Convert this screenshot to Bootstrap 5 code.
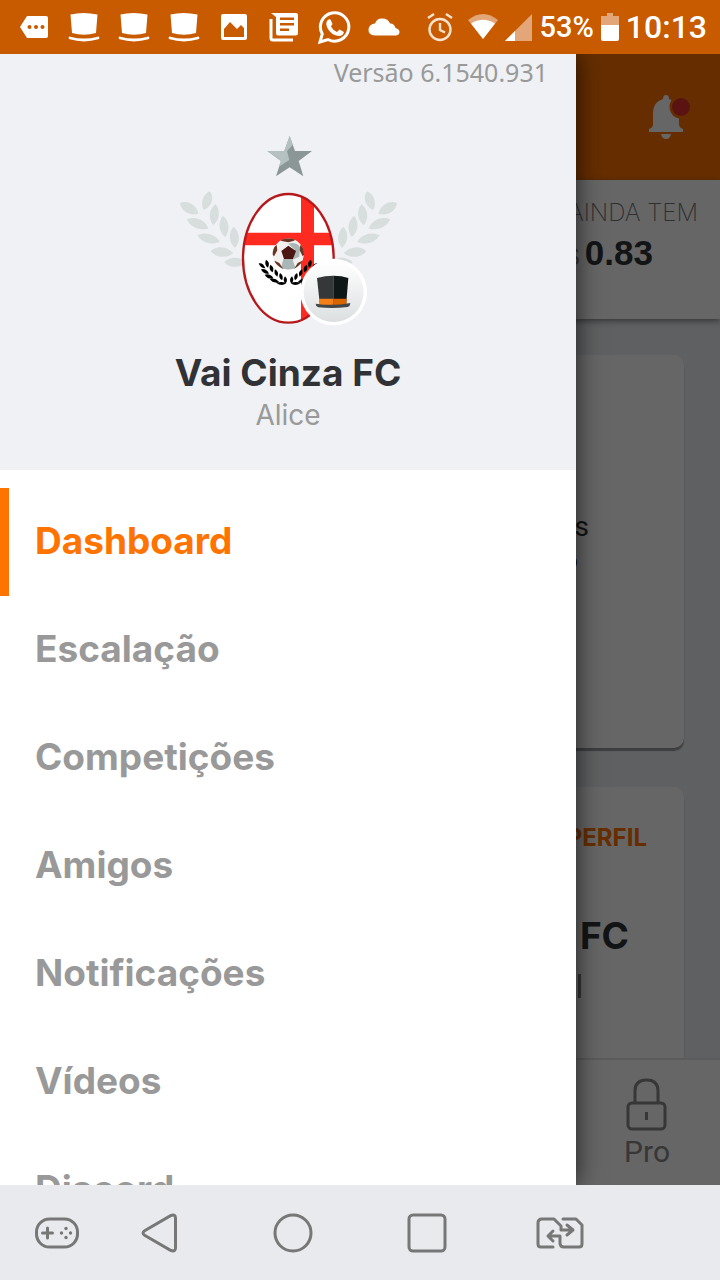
<!DOCTYPE html>
<html lang="pt-BR">
<head>
<meta charset="utf-8">
<meta name="viewport" content="width=device-width, initial-scale=1">
<title>Vai Cinza FC</title>
<link href="https://cdn.jsdelivr.net/npm/bootstrap@5.3.0/dist/css/bootstrap.min.css" rel="stylesheet">
<style>
  body { font-family: Inter, "Open Sans", sans-serif; color: #303236; }
  svg { display: block; flex: none; }
  .status-bar { height: 54px; background: #c85a00; color: #fff; font-family: Roboto, sans-serif; padding: 0 13px 0 9px; }
  .status-cell { width: 50px; }
  .status-right { gap: 7px; }
  .battery-text { font-size: 29px; line-height: 54px; font-weight: 500; }
  .clock { font-size: 32px; line-height: 54px; font-weight: 500; }
  .stage { min-height: 0; background: #eceff3; }
  .app-header { height: 126px; background: #ff7300; padding-right: 30px; }
  .balance { height: 139px; background: #fff; box-shadow: 0 2px 6px rgba(0,0,0,.45); padding: 18px 22px 0 0; }
  .balance-label { font-size: 24px; line-height: 30px; font-weight: 200; color: #777; }
  .balance-value { font: 700 35px/50px "Liberation Sans", sans-serif; padding-right: 45px; }
  .balance-value span { font-size: 24px; font-weight: 400; color: #888; margin-right: -4px; }
  .panel { background: #fff; border-radius: 10px; margin: 36px 36px 0; box-shadow: 0 3px 1px rgba(0,0,0,.35); }
  .panel-tall { height: 393px; padding: 155px 95px 0 0; font: 28px/34px Roboto, sans-serif; }
  .panel-tall small { font-size: 24px; padding-right: 11px; }
  .panel-profile { height: 398px; margin-top: 39px; padding: 36px 37px 0 0; }
  .profile-link { font-size: 24px; line-height: 30px; font-weight: 700; color: #ff7300; text-decoration: none; }
  .profile-name { font-size: 37px; line-height: 48px; font-weight: 700; margin-top: 59px; padding-right: 18px; }
  .profile-rule { width: 3px; height: 24px; background: #888; margin: 14px 66px 0 0; }
  .tab-bar { height: 127px; background: #fff; border-top: 2px solid #e4e4e4; }
  .tab-pro { color: #8a8a8a; font: 30px/36px Roboto, sans-serif; padding: 18px 50px 0 0; }
  .scrim { background: rgba(0,0,0,.6); }
  .drawer { width: 80%; background: #fff; box-shadow: 0 0 24px rgba(0,0,0,.7); }
  .drawer-head { background: #eff1f4; padding-bottom: 37px; }
  .version { font: 25px/36px "Noto Sans", sans-serif; color: #999; padding-right: 28px; }
  .crest { margin-top: 35px; }
  .team-name { font-size: 37px; line-height: 48px; font-weight: 700; margin-top: 14px; }
  .owner { font-size: 28px; line-height: 36px; color: #999; }
  .menu { padding-top: 18px; }
  .menu a { height: 108px; flex: none; border-left: 9px solid transparent; padding: 0 26px 2px; color: #999; font-size: 37px; line-height: 48px; font-weight: 700; }
  .menu a.active { color: #ff7300; border-color: #ff7300; }
  .system-nav { height: 95px; background: #e9eaee; color: #777; }
  .system-nav .edge { flex: none; width: 13%; padding: 0 15px 0 0; }
  .system-nav .main-key { flex: 1 1 0; padding: 0; }
</style>
</head>
<body>
<svg width="0" height="0" class="position-absolute" aria-hidden="true">
  <defs>
    <g id="laurel">
      <g fill="#d7dedd">
        <path d="M-32 0C-18-20 14-20 32 0C14 20-18 20-32 0Z" transform="translate(58 250) rotate(30)"/>
        <path d="M-36 0C-18-20 14-20 34 0C14 18-18 18-36 0Z" transform="translate(84 297) rotate(23)"/>
        <path d="M-36 0C-18-18 14-18 34 0C14 18-18 18-36 0Z" transform="translate(117 341) rotate(16)"/>
        <path d="M-34 0C-18-20 14-20 34 0C14 18-18 18-34 0Z" transform="translate(156 382) rotate(5)"/>
        <path d="M-34 0C-18-18 14-18 34 0C14 18-18 18-34 0Z" transform="translate(197 412)"/>
        <path d="M-28 0C-14-18 14-20 30-6C22 17-12 18-28 0Z" transform="translate(112 229) rotate(-67)"/>
        <path d="M-32 0C-14-18 14-18 32 0C14 18-14 18-32 0Z" transform="translate(133 269) rotate(-84)"/>
        <path d="M-32 0C-14-18 14-18 32 0C14 18-14 18-32 0Z" transform="translate(162 304) rotate(-96)"/>
        <path d="M-32 0C-14-18 14-18 32 0C14 18-14 18-32 0Z" transform="translate(193 337) rotate(-94)"/>
      </g>
    </g>
    <g id="sprig">
      <path d="M266 415q14-3 20 15q-15 0-20-15ZM273 433q16-4 24 13q-17 3-24-13ZM284 449q16-5 26 10q-16 6-26-10ZM299 462q16-5 28 8q-16 8-28-8ZM318 473q18-5 31 1q-13 12-31-1ZM288 404q14 8 6 24q-13-8-6-24ZM301 419q14 8 7 23q-14-8-7-23ZM315 433q14 8 7 22q-13-8-7-22ZM330 444q13 9 6 22q-13-9-6-22ZM345 454q11 10 2 22q-11-10-2-22Z"/>
    </g>
    <symbol id="hat-line" viewBox="0 0 32 32">
      <path fill="#fff" d="M2.500 1.500Q15-1.500 29.500 1.500L28 20Q16 23.500 4 20Z"/>
      <path fill="none" stroke="#fff" stroke-width="2.800" stroke-linecap="round" d="M2 25Q16 29 30 25"/>
    </symbol>
  </defs>
</svg>

<div class="vh-100 d-flex flex-column overflow-hidden">
  <header class="status-bar d-flex align-items-center justify-content-between">
    <div class="d-flex align-items-center pt-1">
      <div class="status-cell d-flex justify-content-center"><svg width="30" height="32" viewBox="0 0 30 32"><path fill="#fff" fill-rule="evenodd" d="M8 3H27Q29 3 29 5V23Q29 25 27 25H8L1 14ZM10.500 12a2 2 0 1 0 .01 0ZM17 12a2 2 0 1 0 .01 0ZM23.500 12a2 2 0 1 0 .01 0Z"/></svg></div>
      <div class="status-cell d-flex justify-content-center"><svg width="32" height="32"><use href="#hat-line"/></svg></div>
      <div class="status-cell d-flex justify-content-center"><svg width="32" height="32"><use href="#hat-line"/></svg></div>
      <div class="status-cell d-flex justify-content-center"><svg width="32" height="32"><use href="#hat-line"/></svg></div>
      <div class="status-cell d-flex justify-content-center"><svg width="26" height="32" viewBox="0 0 26 32"><path fill="#fff" fill-rule="evenodd" d="M2 1H24Q26 1 26 3V25Q26 27 24 27H2Q0 27 0 25V3Q0 1 2 1ZM3 24H23V15L20 12L16 16L9 9L3 16Z"/></svg></div>
      <div class="status-cell d-flex justify-content-center"><svg width="30" height="32" viewBox="0 0 30 32"><path fill="#fff" fill-rule="evenodd" d="M2 0H27Q29 0 29 2V20Q29 22.500 26.500 22.500H9Q7 22.500 7 20V4ZM11 4.500V7H25V4.500ZM11 10V12.500H25V10ZM11 15.500V18H20V15.500Z"/><path fill="none" stroke="#fff" stroke-width="3" d="M2 6V25Q2 27 4 27H24"/></svg></div>
      <div class="status-cell d-flex justify-content-center"><svg width="34" height="36" viewBox="0 0 34 36"><path fill="none" stroke="#fff" stroke-width="3" d="M3 31L5.300 23A14.200 14.200 0 1 1 11 28.500Z"/><path fill="#fff" d="M9.500 11Q11 7.500 13.500 8.500L15.500 13L14 15.500Q16 19.500 20 21L22.500 18.500L27 21Q26 25 22 25Q16 24.500 12 19.500Q8.500 15 9.500 11Z"/></svg></div>
      <div class="status-cell d-flex justify-content-center"><svg width="32" height="32" viewBox="0 0 32 32"><path fill="#fff" d="M7 22.500Q0 22 .5 16Q1.500 11 7 10.500Q9 5 14.500 5.500Q20 5.500 22 10.500Q26 10 27.500 15Q31.500 16 31.500 19Q31.500 22 28 22.500Z"/></svg></div>
    </div>
    <div class="status-right d-flex align-items-center">
      <svg class="me-2" width="26" height="32" viewBox="0 0 26 32"><g fill="none" stroke="#fbe3cf" stroke-width="2.400"><circle cx="13" cy="18.500" r="10.500"/><path d="M13 12V19L18 21.500M1 7L7 3M19 3L25 7" /></g></svg>
      <svg width="30" height="32" viewBox="0 0 30 32"><path fill="#e3a678" d="M0 9Q15-3 30 9L15 28Z"/><path fill="#fff" d="M3 12.500Q15 5 27 12.500L15 28Z"/></svg>
      <svg width="27" height="32" viewBox="0 0 27 32"><path fill="#e3a678" d="M27 3V30H0Z"/><path fill="#fff" d="M10 20V30H0Z"/></svg>
      <span class="battery-text">53%</span>
      <svg width="18" height="32" viewBox="0 0 18 32"><path fill="#e3a678" d="M6 2H12V5H18V16H0V5H6Z"/><path fill="#fff" d="M0 14H18V28Q18 30 16 30H2Q0 30 0 28Z"/></svg>
      <span class="clock">10:13</span>
    </div>
  </header>

  <div class="stage flex-grow-1 position-relative overflow-hidden d-flex flex-column">
    <div class="app-header d-flex flex-shrink-0 align-items-center justify-content-end">
      <svg width="44" height="48" viewBox="0 0 44 48"><path fill="#fff" d="M17 6Q17 2 20 2Q23 2 23 6Q33 9 33 20V31Q33 35 37 36V39H3V36Q7 35 7 31V20Q7 9 17 6ZM15 41H25Q24 46 20 46Q16 46 15 41Z"/><circle cx="35" cy="14" r="11.500" fill="#ff7300"/><circle cx="35" cy="14" r="9" fill="#e2302b"/></svg>
    </div>
    <section class="balance flex-shrink-0 text-end">
      <div class="balance-label">AINDA TEM</div>
      <div class="balance-value"><span>$</span> 0.83</div>
    </section>
    <main class="flex-grow-1 overflow-hidden" style="min-height:0">
      <section class="panel panel-tall text-end d-flex flex-column"><span>s</span><small>o</small></section>
      <section class="panel panel-profile text-end">
        <a href="#" class="profile-link d-block">PERFIL</a>
        <div class="profile-name">FC</div>
        <div class="profile-rule ms-auto"></div>
      </section>
    </main>
    <nav class="tab-bar flex-shrink-0 d-flex justify-content-end">
      <button type="button" class="tab-pro btn border-0 rounded-0 d-flex flex-column align-items-center">
        <svg width="42" height="56" viewBox="0 0 42 56"><g fill="none" stroke="currentColor" stroke-width="3"><rect x="2" y="25" width="37" height="26" rx="4"/><path d="M9 25V13Q9 2 20.500 2T32 13V25M20.500 34V42"/></g></svg>
        Pro
      </button>
    </nav>
    <div class="scrim position-absolute top-0 start-0 w-100 h-100"></div>

    <aside class="drawer position-absolute top-0 start-0 h-100 overflow-hidden d-flex flex-column">
      <div class="drawer-head flex-shrink-0 d-flex flex-column align-items-center">
        <div class="version align-self-end">Versão 6.1540.931</div>
        <svg class="crest" width="240" height="210" viewBox="-6 0 720 630" role="img" aria-label="Escudo">
          <defs>
            <clipPath id="oval"><ellipse cx="355" cy="400" rx="135" ry="193"/></clipPath>
            <clipPath id="ball"><circle cx="355" cy="387" r="47"/></clipPath>
            <linearGradient id="disc" x1="0" y1="0" x2="0" y2="1"><stop offset="0" stop-color="#fff"/><stop offset="1" stop-color="#dcdfe0"/></linearGradient>
          </defs>
          <path fill="#8b9696" d="M359 33L375 78H426L386 108L400 154L359 127L318 154L333 108L292 78H343Z"/>
          <path fill="#b5c1c0" d="M359 33L368 60L351 78L358 105L326 126L333 108L292 78H343Z"/>
          <use href="#laurel"/><use href="#laurel" transform="translate(711 0) scale(-1 1)"/>
          <ellipse cx="355" cy="400" rx="136" ry="194" fill="#fff"/>
          <g clip-path="url(#oval)"><path fill="#ff2a20" d="M210 323H500V361H210ZM393 200H432V600H393Z"/></g>
          <ellipse cx="355" cy="400" rx="136" ry="193" fill="none" stroke="#b5191c" stroke-width="7"/>
          <use href="#sprig"/><use href="#sprig" transform="translate(711 0) scale(-1 1)"/>
          <g clip-path="url(#ball)">
            <circle cx="355" cy="387" r="47" fill="#f2f1ef"/>
            <path fill="#a9b7b6" d="M355 356Q380 350 390 366L388 395L368 404L378 434H332L340 402H370L375 375Z"/>
            <path fill="#4c1712" d="M355 362L378 378L369 402H342L334 378Z"/>
            <path fill="#6b3525" d="M325 340H385L370 348L355 352L335 348ZM306 370L320 360L322 376L312 394L306 388ZM402 370L391 360L389 376L398 394L404 388ZM314 407L328 414L340 432L330 440L308 420ZM397 407L383 414L372 432L382 440L404 420Z"/>
          </g>
          <circle cx="491" cy="501" r="100" fill="#fff"/><circle cx="491" cy="501" r="90" fill="url(#disc)"/>
          <path fill="#353839" d="M441 459Q465 452 490 452V543H450Z"/><path fill="#101817" d="M490 452Q515 452 535 459L528 543H490Z"/>
          <path fill="#f57f17" d="M447 521H490V540H448Z"/><path fill="#d96500" d="M490 521H530L529 540H490Z"/>
          <path fill="#424646" d="M437 536Q490 544 541 534Q541 543 533 546Q490 551 445 547Q437 544 437 536Z"/>
        </svg>
        <h1 class="team-name mb-0">Vai Cinza FC</h1>
        <div class="owner">Alice</div>
      </div>
      <nav class="menu nav flex-column flex-nowrap">
        <a class="nav-link active d-flex align-items-center" href="#" aria-current="page">Dashboard</a>
        <a class="nav-link d-flex align-items-center" href="#">Escalação</a>
        <a class="nav-link d-flex align-items-center" href="#">Competições</a>
        <a class="nav-link d-flex align-items-center" href="#">Amigos</a>
        <a class="nav-link d-flex align-items-center" href="#">Notificações</a>
        <a class="nav-link d-flex align-items-center" href="#">Vídeos</a>
        <a class="nav-link d-flex align-items-center" href="#">Discord</a>
      </nav>
    </aside>
  </div>

  <footer class="system-nav d-flex flex-shrink-0">
    <button type="button" class="edge btn border-0 d-flex align-items-center justify-content-end" aria-label="Jogos"><svg width="44" height="32" viewBox="0 0 44 32"><rect x="1.500" y="2" width="41" height="28" rx="13" fill="none" stroke="#777" stroke-width="3"/><path stroke="#777" stroke-width="3" stroke-linecap="round" d="M7.500 16H17.500M12.500 11V21"/><g fill="#777"><circle cx="31" cy="11.500" r="1.700"/><circle cx="31" cy="20.500" r="1.700"/><circle cx="26.500" cy="16" r="1.700"/><circle cx="35.500" cy="16" r="1.700"/></g></svg></button>
    <button type="button" class="main-key btn border-0 d-flex align-items-center justify-content-center" aria-label="Voltar"><svg width="40" height="40" viewBox="0 0 40 40"><path fill="none" stroke="#777" stroke-width="3" d="M5 17.500L31 2.500Q35.500 1 35.500 5V35Q35.500 39 31 37.500L5 22.500Q1 20 5 17.500Z"/></svg></button>
    <button type="button" class="main-key btn border-0 d-flex align-items-center justify-content-center" aria-label="Início"><svg width="40" height="40" viewBox="0 0 40 40"><circle cx="20" cy="20" r="18" fill="none" stroke="#777" stroke-width="3"/></svg></button>
    <button type="button" class="main-key btn border-0 d-flex align-items-center justify-content-center" aria-label="Recentes"><svg width="40" height="40" viewBox="0 0 40 40"><rect x="2" y="2" width="36" height="36" rx="4" fill="none" stroke="#777" stroke-width="3"/></svg></button>
    <button type="button" class="main-key btn border-0 d-flex align-items-center justify-content-center" aria-label="Alternar aplicativos"><svg width="48" height="32" viewBox="0 0 48 32"><path fill="none" stroke="#777" stroke-width="3" stroke-linecap="round" stroke-linejoin="round" d="M17 30H5Q2 30 2 27V6Q2 2 6 2H18L25 9V13H37M31 8L37 13L31 18M27 2H40L46 8V27Q46 30 43 30H28Q24 30 24 26V19H12M17 14L12 19L17 24"/></svg></button>
    <div class="edge"></div>
  </footer>
</div>
<script src="https://cdn.jsdelivr.net/npm/bootstrap@5.3.0/dist/js/bootstrap.bundle.min.js"></script>
</body>
</html>
